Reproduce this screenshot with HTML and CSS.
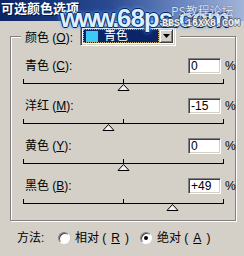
FILE: index.html
```html
<!DOCTYPE html>
<html lang="zh-CN">
<head>
    <meta charset="UTF-8">
    <meta name="viewport" content="width=device-width, initial-scale=1.0">
    <title>可选颜色选项</title>
    <link rel="stylesheet" href="styles.css">
</head>
<body>
    <div class="dialog">
        <div class="caption">
            <span class="caption-title">可选颜色选项</span>
            <span class="mark-site"><span class="mark-www">www.</span>68ps.com</span>
            <span class="mark-forum">PS教程论坛</span>
            <span class="mark-bbs">BBS.16XX8.COM</span>
        </div>

        <fieldset class="group">
            <legend class="group-legend">
                <div class="legend-row">
                    <span>颜色 (<u>O</u>):</span>
                    <div class="combo">
                        <div class="combo-value"><span class="swatch"></span>青色</div>
                        <div class="combo-btn">
                            <svg width="7" height="4" viewBox="0 0 7 4"><polygon points="0,0 7,0 3.5,4" fill="#000"/></svg>
                        </div>
                    </div>
                </div>
            </legend>

            <div class="channels">
                <div class="channel">
                    <div class="channel-row">
                        <span class="channel-name">青色 (<u>C</u>):</span>
                        <input class="amount" type="text" value="0">
                        <span class="pct">%</span>
                    </div>
                    <svg class="slider" width="202" height="14" viewBox="0 0 202 14">
                        <path d="M0.5 2v5M100.5 2v5M200.5 2v5M0.5 6.5h200" stroke="#000" fill="none"/>
                        <polygon points="95,13.5 100.5,7.5 106,13.5" fill="#f2f2f2" stroke="#000"/>
                    </svg>
                </div>

                <div class="channel">
                    <div class="channel-row">
                        <span class="channel-name">洋红 (<u>M</u>):</span>
                        <input class="amount" type="text" value="-15">
                        <span class="pct">%</span>
                    </div>
                    <svg class="slider" width="202" height="14" viewBox="0 0 202 14">
                        <path d="M0.5 2v5M100.5 2v5M200.5 2v5M0.5 6.5h200" stroke="#000" fill="none"/>
                        <polygon points="80,13.5 85.5,7.5 91,13.5" fill="#f2f2f2" stroke="#000"/>
                    </svg>
                </div>

                <div class="channel">
                    <div class="channel-row">
                        <span class="channel-name">黄色 (<u>Y</u>):</span>
                        <input class="amount" type="text" value="0">
                        <span class="pct">%</span>
                    </div>
                    <svg class="slider" width="202" height="14" viewBox="0 0 202 14">
                        <path d="M0.5 2v5M100.5 2v5M200.5 2v5M0.5 6.5h200" stroke="#000" fill="none"/>
                        <polygon points="95,13.5 100.5,7.5 106,13.5" fill="#f2f2f2" stroke="#000"/>
                    </svg>
                </div>

                <div class="channel">
                    <div class="channel-row">
                        <span class="channel-name">黑色 (<u>B</u>):</span>
                        <input class="amount" type="text" value="+49">
                        <span class="pct">%</span>
                    </div>
                    <svg class="slider" width="202" height="14" viewBox="0 0 202 14">
                        <path d="M0.5 2v5M100.5 2v5M200.5 2v5M0.5 6.5h200" stroke="#000" fill="none"/>
                        <polygon points="144,13.5 149.5,7.5 155,13.5" fill="#f2f2f2" stroke="#000"/>
                    </svg>
                </div>
            </div>
        </fieldset>

        <div class="method">
            <span class="method-label">方法:</span>
            <span class="option"><span class="radio"></span>相对 (<u>R</u>)</span>
            <span class="option"><span class="radio on"></span>绝对 (<u>A</u>)</span>
        </div>
    </div>
</body>
</html>
```

FILE: styles.css
```css
* {
    box-sizing: border-box;
}
body {
    margin: 0;
    background-color: #d4d0c8;
    font-family: "Liberation Sans", "Noto Sans CJK SC", sans-serif;
    font-size: 12px;
    color: #000;
}
u {
    text-decoration: underline;
}
.dialog {
    position: relative;
    width: 244px;
    height: 256px;
    overflow: hidden;
}

/* title bar with the forum watermark on top */
.caption {
    position: relative;
    height: 21px;
    background: linear-gradient(90deg, #0a2464 0%, #2a4a92 45%, #6c88c2 75%, #a2b4d8 100%);
    z-index: 1;
}
.caption-title {
    display: block;
    padding-left: 1px;
    font-family: "Noto Sans CJK SC", sans-serif;
    font-size: 13px;
    font-weight: bold;
    line-height: 15px;
    color: #fff;
    text-shadow: 1px 1px 0 #061640;
}
.mark-site {
    position: absolute;
    left: 60px;
    top: 5px;
    font: bold 26px/26px "Liberation Sans", sans-serif;
    letter-spacing: -1px;
    white-space: nowrap;
    color: #d8f0ff;
    text-shadow: 1px 0 0 #0a2060, -1px 0 0 #0a2060, 0 1px 0 #0a2060, 0 -1px 0 #0a2060, 0 0 3px #2f7cf0, 0 0 5px #6ab4ff;
}
.mark-www {
    letter-spacing: -2.5px;
}
.mark-forum {
    position: absolute;
    left: 171px;
    top: 4px;
    font-family: "Noto Sans CJK SC", sans-serif;
    font-size: 12px;
    line-height: 14px;
    white-space: nowrap;
    color: #eef0f6;
    opacity: 0.85;
    text-shadow: 0 0 1px #1a2450;
}
.mark-bbs {
    position: absolute;
    left: 162px;
    top: 19px;
    font: bold 10px/10px "Liberation Mono", monospace;
    white-space: nowrap;
    color: #fff;
    opacity: 0.85;
    text-shadow: 1px 0 0 #555, -1px 0 0 #555, 0 1px 0 #555, 0 -1px 0 #555;
}

/* group box */
.group {
    margin: 5px 0 0 10px;
    width: 226px;
    min-width: 0;
    padding: 12px 2px 9px 14px;
    border: 1px solid #808080;
    box-shadow: inset 1px 1px 0 #fff, 1px 1px 0 #fff;
}
.group-legend {
    margin-left: -4px;
    padding: 0 4px;
    background-color: #d4d0c8;
}
.legend-row {
    display: flex;
    align-items: center;
    height: 20px;
}
.combo {
    display: flex;
    width: 96px;
    height: 20px;
    margin-left: 7px;
    padding: 2px;
    background-color: #fff;
    border: 1px solid;
    border-color: #808080 #fff #fff #808080;
    box-shadow: inset 1px 1px 0 #404040, inset -1px -1px 0 #d4d0c8;
}
.combo-value {
    flex: 1;
    display: flex;
    align-items: center;
    gap: 6px;
    padding-left: 3px;
    background-color: #0a246a;
    color: #fff;
    line-height: 14px;
    outline: 1px dotted #b8a870;
    outline-offset: -1px;
}
.swatch {
    width: 12px;
    height: 11px;
    background-color: #3ccaf4;
}
.combo-btn {
    display: flex;
    align-items: center;
    justify-content: center;
    width: 14px;
    background-color: #d4d0c8;
    border: 1px solid;
    border-color: #d4d0c8 #404040 #404040 #d4d0c8;
    box-shadow: inset 1px 1px 0 #fff, inset -1px -1px 0 #808080;
}

/* channel rows */
.channels {
    display: flex;
    flex-direction: column;
    gap: 7px;
}
.channel-row {
    display: flex;
    align-items: center;
    height: 16px;
    line-height: 16px;
}
.channel-name {
    flex: 1;
}
.amount {
    width: 33px;
    height: 16px;
    margin: 0 4px 0 0;
    padding: 0 0 0 2px;
    background-color: #fff;
    border: 1px solid;
    border-color: #808080 #fff #fff #808080;
    box-shadow: inset 1px 1px 0 #404040, inset -1px -1px 0 #d4d0c8;
    font-family: "Liberation Sans", sans-serif;
    font-size: 12px;
    line-height: 14px;
    color: #000;
    outline: none;
}
.pct {
    width: 8px;
}
.slider {
    display: block;
    margin: 3px 0 0 -2px;
}

/* method radios */
.method {
    display: flex;
    align-items: center;
    height: 16px;
    margin-top: 9px;
    padding-left: 17px;
    line-height: 16px;
}
.method-label {
    width: 41px;
}
.option {
    display: flex;
    align-items: center;
    gap: 5px;
}
.option + .option {
    margin-left: 11px;
}
.radio {
    display: flex;
    align-items: center;
    justify-content: center;
    width: 12px;
    height: 12px;
    border-radius: 50%;
    background-color: #fff;
    border: 1px solid;
    border-color: #808080 #fff #fff #808080;
    box-shadow: inset 1px 1px 0 #404040;
}
.radio.on::after {
    content: "";
    width: 4px;
    height: 4px;
    border-radius: 50%;
    background-color: #000;
}
```
